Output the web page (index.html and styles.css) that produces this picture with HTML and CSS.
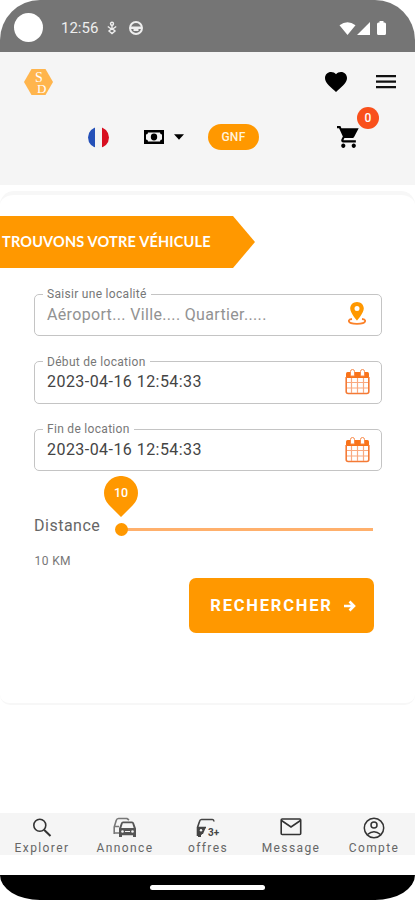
FILE: index.html
```html
<!DOCTYPE html>
<html lang="fr">
<head>
<meta charset="utf-8">
<title>Location de véhicules</title>
<link rel="stylesheet" href="styles.css">
</head>
<body>
<div class="phone">
  <div class="status">
    <span class="camera"></span>
    <span class="clock">12:56</span>
    <svg class="st-a" width="10" height="14" viewBox="0 0 10 14" fill="none" stroke="#eee" stroke-width="1.4"><circle cx="5" cy="2.800" r="1.500"/><path d="M5 4v4M.8 5.500L5 8.500l4.200-3M5 7.500L2 10l3 2.500L8 10z"/></svg>
    <svg class="st-b" width="14" height="14" viewBox="0 0 14 14"><circle cx="7" cy="7" r="6" fill="none" stroke="#eee" stroke-width="2"/><path d="M1 5.500h12v2.500H1z" fill="#eee"/><path d="M4.500 8h5v2h-5z" fill="#eee"/></svg>
    <svg class="st-c" width="48" height="16" viewBox="0 0 48 16" fill="#fff"><path d="M.5 4.200Q8.500-1.500 16.500 4.200L8.500 14zM31 1v13H18zM38 3q0-1.500 1.500-1.500h1V0h4v1.500h1Q47 1.500 47 3v9.500q0 1.500-1.500 1.500h-6Q38 14 38 12.500z"/></svg>
  </div>
  <header class="header">
    <div class="bar">
      <svg class="logo" width="31" height="28" viewBox="0 0 31 28"><path d="M8.500 1h14L30 14l-7.500 13h-14L1 14z" fill="#ffb54d"/><text x="12" y="13.500" class="logo-s">S</text><text x="14" y="24.500" class="logo-d">D</text></svg>
      <svg class="heart" width="22" height="20" viewBox="2 3 20 18.400" preserveAspectRatio="none"><path d="M12 21.350l-1.450-1.320C5.400 15.360 2 12.280 2 8.500 2 5.420 4.420 3 7.500 3c1.740 0 3.410.81 4.500 2.090C13.090 3.810 14.760 3 16.500 3 19.580 3 22 5.420 22 8.500c0 3.780-3.400 6.860-8.550 11.540z"/></svg>
      <svg class="menu" width="20" height="14" viewBox="0 0 20 14"><path d="M0 0h20v2.200H0zM0 5.500h20v2.200H0zM0 11h20v2.200H0z" fill="#111"/></svg>
    </div>
    <div class="tools">
      <span class="flag"></span>
      <svg class="cash" width="20" height="14" viewBox="0 0 20 14"><path d="M0 0h20v14H0z"/><path d="M4 2.500h12q0 2 2 2v5q-2 0-2 2H4q0-2-2-2v-5q2 0 2-2z" fill="#f5f5f5"/><ellipse cx="10" cy="7" rx="3.200" ry="3.400"/></svg>
      <svg class="caret" width="10" height="6" viewBox="0 0 10 6"><path d="M0 .3h10L5 5.700z"/></svg>
      <span class="currency">GNF</span>
      <div class="cart">
        <svg width="22" height="22" viewBox="1 2 21 20" preserveAspectRatio="none"><path d="M7 18c-1.100 0-1.990.9-1.990 2S5.900 22 7 22s2-.9 2-2-.9-2-2-2zM1 2v2h2l3.600 7.590-1.350 2.450C4.520 15.370 5.480 17 7 17h12v-2H7.420c-.14 0-.25-.11-.25-.25l.9-1.750h7.480c.75 0 1.410-.41 1.750-1.030L21.700 4H5.210l-.94-2zM17 18c-1.100 0-1.990.9-1.990 2s.89 2 1.990 2 2-.9 2-2-.9-2-2-2z"/></svg>
        <span class="badge">0</span>
      </div>
    </div>
  </header>
  <main class="card">
    <h1 class="banner">TROUVONS VOTRE VÉHICULE</h1>
    <form class="form">
      <fieldset class="field">
        <legend>Saisir une localité</legend>
        <span class="value hint">Aéroport... Ville.... Quartier.....</span>
        <svg class="pin" width="18" height="23" viewBox="0 0 18 23"><path d="M9 0C5.200 0 2.200 2.800 2.200 6.500 2.200 11 9 18.500 9 18.500s6.800-7.500 6.800-12C15.800 2.800 12.800 0 9 0zm0 4a2.500 2.500 0 1 1 0 5 2.500 2.500 0 0 1 0-5z" fill="#ff9800" fill-rule="evenodd"/><path d="M4 17C1.500 17.300.8 18 .8 18.800 1 22.800 17 22.800 17.200 18.800c0-.8-.7-1.500-3.200-1.800" fill="none" stroke="#fb8128" stroke-width="1.800"/></svg>
      </fieldset>
      <fieldset class="field">
        <legend>Début de location</legend>
        <span class="value">2023-04-16 12:54:33</span>
        <svg class="cal" width="25" height="27" viewBox="0 0 25 27"><use href="#calendar"/></svg>
      </fieldset>
      <fieldset class="field">
        <legend>Fin de location</legend>
        <span class="value">2023-04-16 12:54:33</span>
        <svg class="cal" width="25" height="27" viewBox="0 0 25 27"><g id="calendar"><path d="M1 5.500q0-1.500 1.500-1.500h20Q24 4 24 5.500V10H1z" fill="#f9731a"/><path d="M1.200 9v14.500q0 2 2 2h18.600q2 0 2-2V9" fill="none" stroke="#f47a35" stroke-width="1.600"/><path d="M6.500 10v15M12.500 10v15M18.500 10v15M2 14.500h21M2 20h21" stroke="#f9a980" stroke-width="1.200"/><path d="M5.500 8V3.500a2 2 0 0 1 4 0V8zM15.500 8V3.500a2 2 0 0 1 4 0V8z" fill="#fff" stroke="#f98a4a"/></g></svg>
      </fieldset>
      <div class="distance">
        <span class="distance-label">Distance</span>
        <div class="track">
          <span class="thumb"></span>
          <div class="bubble"><svg width="34" height="41" viewBox="0 0 34 41"><path d="M17 41L5 29A17 17 0 1 1 29 29z" fill="#ff9800"/></svg><span>10</span></div>
        </div>
      </div>
      <div class="km">10 KM</div>
      <button class="search" type="button">RECHERCHER
        <svg width="12" height="12" viewBox="0 0 12 12"><path d="M0 6h9.500M5.500 1.500L10 6l-4.500 4.500" fill="none" stroke="#fff" stroke-width="2.600"/></svg>
      </button>
    </form>
  </main>
  <nav class="nav">
    <a><svg width="22" height="22" viewBox="0 0 22 22" fill="none" stroke="#333" stroke-width="1.600"><circle cx="8.800" cy="8.300" r="6"/><path d="M13 12.700l6.500 6.300" stroke-width="2"/></svg>Explorer</a>
    <a><svg width="26" height="22" viewBox="0 0 26 22"><path d="M2.200 17v-7l2-6.500Q4.800 1.500 6.500 1.500H15l2 1.500M3 9.500h4M3 16h4" fill="none" stroke="#777" stroke-width="1.600"/><path d="M7 20v-8.500l2-5.500Q9.400 4.500 11 4.500h9q1.600 0 2 1.500l2 5.500V20h-3v-1.800H10V20z" fill="#555"/><path d="M10.800 6.200h9.400l1.500 4.800H9.300z" fill="#f5f5f5"/><circle cx="10.500" cy="14.500" r="1.300" fill="#f5f5f5"/><circle cx="20.500" cy="14.500" r="1.300" fill="#f5f5f5"/><path d="M13 14h5v1h-5z" fill="#f5f5f5"/></svg>Annonce</a>
    <a><svg width="26" height="22" viewBox="0 0 26 22"><path d="M2.500 19v-8.500l2-6Q5 2.500 6.500 2.500h11q1.200 0 1.500 2M3 10.500h8M2.500 17H7" fill="none" stroke="#444" stroke-width="1.600"/><path d="M3 10h8l-3 7H3zM3 16h3v4H3z" fill="#444"/><circle cx="6" cy="13.300" r="1.200" fill="#f5f5f5"/><text x="13" y="18.500" class="plus">3+</text></svg>offres</a>
    <a><svg width="22" height="20" viewBox="0 0 22 20" fill="none" stroke="#333" stroke-width="1.600"><rect x="1.200" y="2" width="19.500" height="15.500" rx="1"/><path d="M1.500 3.500L11 10l9.500-6.500"/></svg>Message</a>
    <a><svg width="22" height="22" viewBox="0 0 22 22" fill="none" stroke="#333" stroke-width="1.500"><circle cx="11" cy="11" r="9.700"/><circle cx="11" cy="8" r="3"/><path d="M4.500 17.500q6.500-5.500 13 0"/></svg>Compte</a>
  </nav>
  <footer class="system"><span></span></footer>
</div>
</body>
</html>
```
FILE: styles.css
```css
* { box-sizing: border-box; }
body { margin: 0; background: #fff; font-family: Roboto, sans-serif; }
svg { display: block; flex: none; }
.phone { width: 415px; height: 900px; display: flex; flex-direction: column; overflow: hidden; }
.status { height: 52px; flex: none; display: flex; align-items: flex-start; background: #757575; border-radius: 40px 40px 0 0; padding-left: 14px; }
.camera { width: 29px; height: 29px; margin-top: 13px; border-radius: 50%; background: #fff; }
.clock { width: 40px; margin: 19px 0 0 18px; font-size: 15px; line-height: 19px; color: #eee; }
.st-a { margin: 21px 0 0 6px; }
.st-b { margin: 21px 0 0 12px; }
.st-c { margin: 21px 0 0 196px; }
.header { height: 133px; flex: none; background: #f5f5f5; }
.bar { height: 60px; display: flex; align-items: center; padding-left: 23px; }
.heart { margin-left: 271px; }
.menu { margin-left: 29px; }
.tools { height: 50px; display: flex; align-items: center; padding-left: 88px; }
.flag { width: 21px; height: 21px; border-radius: 50%; background: linear-gradient(90deg, #2450b8 33%, #f3f3f3 33% 66%, #d80f20 66%); }
.cash { margin-left: 35px; }
.caret { margin-left: 10px; }
.currency { width: 51px; height: 26px; margin-left: 24px; border-radius: 13px; background: #ff9800; color: #fff3dd; font-size: 12px; font-weight: 500; line-height: 26px; text-align: center; letter-spacing: .3px; }
.cart { position: relative; margin-left: 78px; }
.badge { position: absolute; left: 20px; top: -19px; width: 22px; height: 22px; border-radius: 50%; background: #f9501b; color: #fff; font-size: 12px; font-weight: 500; line-height: 22px; text-align: center; }
.logo-s, .logo-d { font-family: "Liberation Serif", serif; font-size: 14px; fill: #fff; }
.logo-d { font-size: 13px; }
.card { height: 514px; flex: none; margin-top: 6px; border: solid #f7f7f7; border-width: 4px 0 2px; border-radius: 14px 14px 10px 10px; padding-top: 21px; }
.banner { width: 255px; height: 52px; margin: 0; padding-left: 2px; background: #ff9800; clip-path: polygon(0 0, 233px 0, 100% 50%, 233px 100%, 0 100%); color: #fff; font: 700 14.500px/52px Lato, sans-serif; letter-spacing: .19px; white-space: nowrap; }
.form { display: flex; flex-direction: column; padding: 19px 33px 0 34px; }
.field { width: 348px; height: 49px; margin: 0 0 18.500px; padding: 0 11px 0 12px; border: 1.500px solid #c4c4c4; border-radius: 5px; display: flex; align-items: flex-start; justify-content: space-between; min-width: 0; }
.field legend { height: 14px; margin-left: -4px; padding: 0 4px; font-size: 12px; line-height: 15px; color: #777; letter-spacing: .3px; }
.value { font-size: 16px; line-height: 19px; margin-top: 3.500px; color: #444; letter-spacing: .45px; white-space: nowrap; }
.hint { color: #929292; letter-spacing: .34px; }
.pin { margin: 1px 4px 0 0; }
.cal { margin-top: -.5px; }
.distance { height: 30px; margin-top: 20.500px; display: flex; align-items: center; }
.distance-label { width: 87px; font-size: 16px; color: #666; letter-spacing: .5px; }
.track { position: relative; width: 252px; height: 3px; margin-top: 8px; background: #ffb06c; }
.thumb { position: absolute; left: -6px; top: -5px; width: 13px; height: 13px; border-radius: 50%; background: #ff9800; }
.bubble { position: absolute; left: -17px; top: -52px; width: 34px; }
.bubble span { position: absolute; left: 0; top: 9px; width: 34px; text-align: center; color: #fff; font-size: 12.500px; line-height: 16px; font-weight: 500; }
.km { margin-top: 13px; padding-left: .5px; font-size: 12px; line-height: 16px; color: #777; letter-spacing: .4px; }
.search { width: 185px; height: 55px; margin: 9px 0 0 155px; padding: 0 0 0 3px; border: 0; border-radius: 7px; background: #ff9800; color: #fff; font: 700 16.500px Roboto, sans-serif; letter-spacing: 1.800px; display: flex; align-items: center; justify-content: center; gap: 11px; }
.nav { height: 42px; flex: none; margin-top: 108px; padding-top: 4px; background: #f5f5f5; display: grid; grid-template-columns: repeat(5, 83px); }
.nav a { height: 39px; padding-left: 1px; display: flex; flex-direction: column; align-items: center; justify-content: space-between; font-size: 12px; line-height: 15px; letter-spacing: 1.400px; color: #666; }
.plus { font: bold 10px Roboto, sans-serif; fill: #444; letter-spacing: 0; }
.system { height: 25px; flex: none; margin-top: 20px; background: #000; border-radius: 0 0 40px 40px / 0 0 25px 25px; display: flex; justify-content: center; padding-top: 10px; }
.system span { width: 115px; height: 5px; border-radius: 3px; background: #fff; }
```
